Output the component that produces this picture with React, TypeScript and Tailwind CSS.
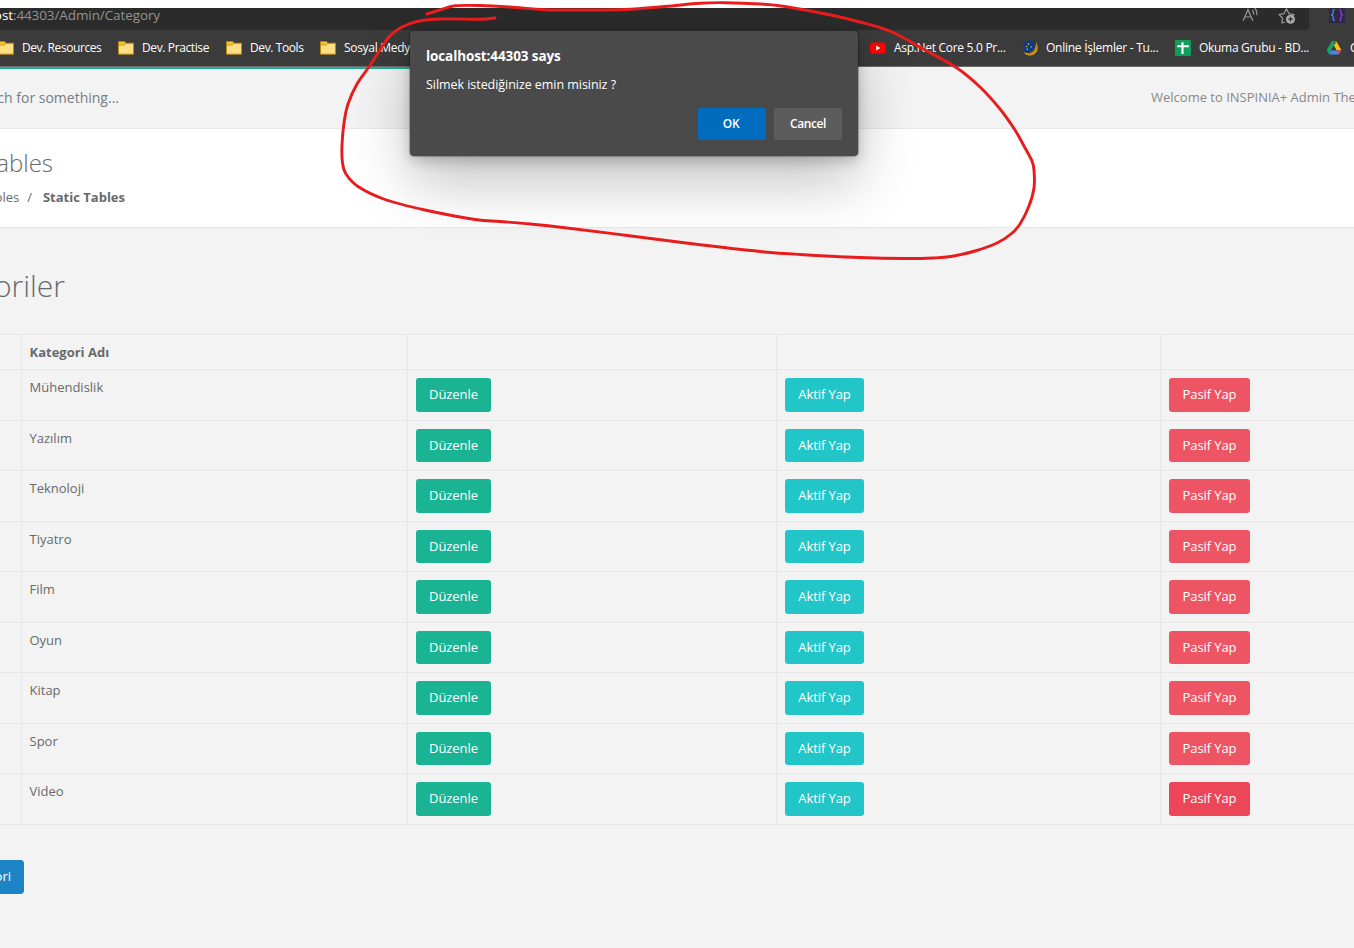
import React from "react";

const UI = "font-['Open_Sans','Noto_Sans',sans-serif]";

type Point = [number, number];

const outline: Point[] = [
  [427, 14], [440, 10], [455, 5.8], [480, 5.5], [510, 7], [545, 9.7], [585, 10], [625, 9.5], [665, 6.5],
  [700, 3.3], [725, 2.7], [760, 4], [785, 6.5], [833, 15.5], [860, 22], [892, 32], [925, 50], [957, 68],
  [980, 87], [1000, 109], [1015, 130], [1024, 146], [1032, 161], [1034, 170], [1034, 188], [1029, 206],
  [1020, 224], [1011, 234], [997, 243], [975, 251], [951, 256.5], [933, 258], [905, 258.5], [860, 257.5],
  [800, 254.5], [760, 251.5], [700, 244.8], [633, 236.2], [567, 228], [530, 224], [500, 221.5], [475, 219.5],
  [425, 210], [385, 199.5], [358, 186.5], [346, 174], [342.5, 163], [342, 145], [344, 123], [348, 104],
  [357, 84], [371, 64], [385, 42], [392, 34], [402, 27], [417, 21.5], [440, 19], [480, 19.3], [495, 18],
];

function smooth(points: Point[]): string {
  let d = `M${points[0][0]} ${points[0][1]}`;
  for (let i = 0; i < points.length - 1; i++) {
    const a = points[Math.max(i - 1, 0)];
    const b = points[i];
    const c = points[i + 1];
    const e = points[Math.min(i + 2, points.length - 1)];
    d += ` C${b[0] + (c[0] - a[0]) / 6} ${b[1] + (c[1] - a[1]) / 6} ${c[0] - (e[0] - b[0]) / 6} ${c[1] - (e[1] - b[1]) / 6} ${c[0]} ${c[1]}`;
  }
  return d;
}

const categories = ["Mühendislik", "Yazılım", "Teknoloji", "Tiyatro", "Film", "Oyun", "Kitap", "Spor", "Video"];

function FolderIcon() {
  return (
    <svg width="16" height="16" viewBox="0 0 16 16" className="shrink-0">
      <path d="M.5 1.5h6l1.2 1.7h7.8v11H.5z" fill="#fede82" stroke="#b8890f" />
      <path d="M1 2h5.3l.9 1.2L6 4.8H1z" fill="#f6c324" />
      <path d="M1 5h5.2l1-1.3" fill="none" stroke="#b8890f" strokeWidth=".8" />
    </svg>
  );
}

function YoutubeIcon() {
  return (
    <svg width="16" height="16" viewBox="0 0 16 16" className="shrink-0">
      <rect y="2.4" width="16" height="11.4" rx="3" fill="#f00" />
      <path d="M6.2 5.6v5l4.3-2.5z" fill="#fff" />
    </svg>
  );
}

function GlobeIcon() {
  return (
    <svg width="16" height="16" viewBox="0 0 16 16" className="shrink-0">
      <path d="M14 2.500c2.200 3.500 2.400 7.500-.4 10.500-3 3.200-8.800 3.700-12.200-1 4 2.300 8.200 1.500 10.700-2C13.500 8 14.200 5.300 14 2.500z" fill="#eaa21f" />
      <path d="M14.600 6c.2 4-3 7.500-7.500 8.300M5 13.500c3 0 6.500-1.500 8-4" fill="none" stroke="#6b5224" strokeWidth=".6" />
      <path d="M1 5.500C2.200 2 5.800-.2 9.300.6c3 .8 3.900 3.600 3 6.500-1 3.300-3.700 5.100-6.800 4.800C2.300 11.500.2 8.800 1 5.500z" fill="#0c3c8c" />
      <path d="M6 3.500l1 1M4 6.500h1.300M8.700 6.600l1 .8M4.800 9.200h1.200" stroke="#f3c340" strokeWidth="1.2" />
    </svg>
  );
}

function SheetIcon() {
  return (
    <svg width="16" height="16" viewBox="0 0 16 16" className="shrink-0">
      <rect width="16" height="16" rx="1.300" fill="#109d58" />
      <path d="M2.300 6.300h11.600M7.500 2.300v11.600" stroke="#fff" strokeWidth="2.100" />
    </svg>
  );
}

function DriveIcon() {
  return (
    <svg width="16" height="16" viewBox="0 0 16 16" className="shrink-0">
      <path d="M5.500 1.500h4.800L5 10.600 2.800 14.300.7 10.200z" fill="#1aa260" />
      <path d="M5.500 1.500h5l4.900 8.800h-5z" fill="#ffc107" />
      <path d="M5.300 10.300h10.100l-2.500 4.100H2.800z" fill="#4285f4" />
      <path d="M10.400 10.300h5l-2.500 4.100z" fill="#e94235" />
      <path d="M5.500 1.500h5L8 5.800z" fill="#178044" />
      <path d="M8 5.800l2.400 4.500H5.300z" fill="#3b3b3b" />
    </svg>
  );
}

function Bookmark({ icon, label, className, textClass }: { icon: React.ReactNode; label: string; className: string; textClass: string }) {
  return (
    <div className={`flex shrink-0 items-center gap-2 ${className}`}>
      {icon}
      <span className={`whitespace-nowrap text-[12px] leading-4 text-white ${textClass}`}>{label}</span>
    </div>
  );
}

function AddressBar() {
  return (
    <div className="flex h-[22px] overflow-hidden bg-[#3b3b3b]">
      <div className="flex w-[1309px] shrink-0 rounded-br-[3px] bg-[#2b2b2b]">
        <div className="flex w-[160px] justify-end overflow-hidden">
          <span className="whitespace-nowrap text-[13.500px] leading-[15px] tracking-[-0.1px] text-[#939393]">
            <span className="text-white">ost</span>:44303/Admin/Category
          </span>
        </div>
        <div className="ml-[1082px] flex gap-[18px]">
          <svg width="18" height="22" viewBox="0 0 18 22" fill="none" stroke="#999" strokeWidth="1.200">
            <path d="M1.200 12.700L6 1.500l4.800 11.200M2.800 9h6.400M10.300 2.300c1.200 1 1.600 2.500 1.200 4.200M12.600.2c2.100 1.700 2.800 4.100 2 7" />
          </svg>
          <svg width="20" height="22" viewBox="0 0 20 22">
            <path d="M7.200 14l-3.300 1 .6-5-3.400-3.400L6 5.700 8.500.8 11 5.700l5 .8-1.500 1.700" fill="none" stroke="#999" strokeWidth="1.200" strokeLinejoin="round" />
            <circle cx="12.500" cy="11.200" r="4.500" fill="#aaa" />
            <path d="M10.100 11.200h4.800M12.500 8.800v4.800" stroke="#2b2b2b" strokeWidth="1.200" />
          </svg>
        </div>
      </div>
      <div className="ml-5 h-[15px] w-4 shrink-0 bg-[#2d2a46]">
        <svg width="16" height="15" viewBox="0 0 16 15" fill="none" strokeWidth="1.200">
          <path d="M5.800 1.500c-2 0-1.600 1-1.600 2.500S4 6.500 2.800 7c1.200.5 1.400 1.500 1.400 3s-.4 2.300 1.600 2.300" stroke="#5596ee" />
          <path d="M10.200 1.500c2 0 1.600 1 1.600 2.500s.2 2.500 1.400 3c-1.200.5-1.400 1.500-1.400 3s.4 2.300-1.600 2.300" stroke="#9d35ee" />
        </svg>
      </div>
    </div>
  );
}

function Bookmarks() {
  return (
    <div className="flex h-9 overflow-hidden bg-[#3b3b3b]">
      <Bookmark className="-ml-[2px] w-[120px]" icon={<FolderIcon />} label="Dev. Resources" textClass="tracking-[-0.42px]" />
      <Bookmark className="w-[108px]" icon={<FolderIcon />} label="Dev. Practise" textClass="tracking-[-0.38px]" />
      <Bookmark className="w-[94px]" icon={<FolderIcon />} label="Dev. Tools" textClass="tracking-[-0.4px]" />
      <Bookmark className="w-[550px]" icon={<FolderIcon />} label="Sosyal Medy" textClass="tracking-[-0.3px]" />
      <Bookmark className="w-[152px]" icon={<YoutubeIcon />} label="Asp.Net Core 5.0 Pr..." textClass="tracking-[-0.3px]" />
      <Bookmark className="w-[153px]" icon={<GlobeIcon />} label="Online İşlemler - Tu..." textClass="tracking-[-0.25px]" />
      <Bookmark className="w-[151px]" icon={<SheetIcon />} label="Okuma Grubu - BD..." textClass="tracking-[-0.3px]" />
      <Bookmark className="w-[60px]" icon={<DriveIcon />} label="G" textClass="" />
    </div>
  );
}

function RowButton({ label, tall, className }: { label: string; tall: boolean; className: string }) {
  return (
    <button className={`flex items-start justify-center whitespace-nowrap rounded-[3px] pt-[7px] text-[13px] font-medium leading-[19px] tracking-[-0.08px] text-white ${tall ? "h-[34px]" : "h-[33px]"} ${className}`}>
      {label}
    </button>
  );
}

const CELL = "border-l border-[#e7e7e7] pt-2 pl-2";
const ROW = "grid grid-cols-[21px_386px_369px_384px_1fr] border-t border-[#e7e7e7]";

function CategoryTable() {
  return (
    <div className="mt-7 border-b border-[#e7e7e7] text-[13px] leading-[19px] text-[#676a6c]">
      <div className={`${ROW} h-[35px]`}>
        <div />
        <div className={`${CELL} font-bold`}><span className="-ml-[0.5px]">Kategori Adı</span></div>
        <div className={CELL} />
        <div className={CELL} />
        <div className={CELL} />
      </div>
      {categories.map((name, i) => (
        <div key={name} className={`${ROW} ${i % 2 === 0 ? "h-[51px]" : "h-[50px]"}`}>
          <div />
          <div className={CELL}><span className="-ml-[0.5px]">{name}</span></div>
          <div className={CELL}>
            <RowButton label="Düzenle" tall={i % 2 === 0} className="w-[75px] bg-[#1ab394]" />
          </div>
          <div className={CELL}>
            <RowButton label="Aktif Yap" tall={i % 2 === 0} className="w-[79px] bg-[#23c6c8]" />
          </div>
          <div className={CELL}>
            <RowButton label="Pasif Yap" tall={i % 2 === 0} className={i === 8 ? "w-[81px] bg-[#ec4758]" : "w-[81px] bg-[#ed5565]"} />
          </div>
        </div>
      ))}
    </div>
  );
}

function ConfirmDialog() {
  return (
    <div className="absolute left-[410px] top-[31px] flex h-[125px] w-[448px] flex-col rounded-[4px] bg-[#4a4a4a] px-4 pt-4 text-white shadow-[0_0_1px_1px_rgba(0,0,0,0.25),0_26px_58px_rgba(0,0,0,0.24),0_5px_14px_rgba(0,0,0,0.2)]">
      <div className="text-[13.500px] font-bold leading-[18px] tracking-[-0.1px]">localhost:44303 says</div>
      <div className="mt-[11px] pt-px text-[12.500px] leading-4 tracking-[-0.05px]">Silmek istediğinize emin misiniz ?</div>
      <div className="mt-[15px] flex justify-end gap-2 text-[12px] font-semibold">
        <button className="h-8 w-[68px] rounded-[2px] bg-[#006cbe] pr-[2px] tracking-[-0.4px]">OK</button>
        <button className="h-8 w-[68px] rounded-[2px] bg-[#5c5c5c] tracking-[-0.4px]">Cancel</button>
      </div>
    </div>
  );
}

export default function App() {
  return (
    <div className={`relative flex h-[948px] w-[1354px] flex-col overflow-hidden bg-[#f3f3f4] ${UI}`}>
      <div className="h-2 shrink-0 bg-white" />
      <AddressBar />
      <Bookmarks />
      <div className="h-px shrink-0 bg-[#6f6b6b]" />
      <header className="flex h-[62px] shrink-0 items-start justify-between overflow-hidden border-b border-[#e7eaec] bg-[#f3f3f3]">
        <div className="h-[61px] w-[420px] border-t-2 border-[#1ab394]">
          <div className="flex w-[119px] justify-end overflow-hidden pt-[19px]">
            <span className="whitespace-nowrap text-[14px] leading-5 text-[#757d84]">rch for something...</span>
          </div>
        </div>
        <div className="w-[203px] overflow-hidden pt-5 text-[13px] leading-5 text-[#888]">
          <span className="whitespace-nowrap">Welcome to INSPINIA+ Admin Theme.</span>
        </div>
      </header>
      <section className="h-[99px] shrink-0 border-b border-[#e7e7e7] bg-white text-[#676a6c]">
        <div className="flex w-[53px] justify-end overflow-hidden pt-[19px]">
          <h2 className="text-[24px] font-light leading-[30px]">Tables</h2>
        </div>
        <div className="mt-[9px] flex w-[125px] justify-end overflow-hidden whitespace-nowrap text-[13px] leading-5">
          <span>ables</span>
          <span className="ml-2">/</span>
          <strong className="ml-[11px] font-bold">Static Tables</strong>
        </div>
      </section>
      <main className="flex flex-1 flex-col bg-[#f3f3f3]">
        <div className="mt-[37px] flex h-[41px] w-[65px] items-center justify-end overflow-hidden">
          <h1 className="text-[30px] font-light leading-[41px] text-[#676a6c]">goriler</h1>
        </div>
        <CategoryTable />
        <div className="mt-[35px] flex w-6 justify-end overflow-hidden rounded-r-[3px]">
          <button className="h-[34px] shrink-0 rounded-[3px] bg-[#1c84c6] px-[13px] text-[13px] font-medium text-white">Kategori</button>
        </div>
      </main>
      <ConfirmDialog />
      <svg className="pointer-events-none absolute left-0 top-0" width="1354" height="948" fill="none">
        <path d={smooth(outline)} stroke="#e81c1c" strokeWidth="2.900" strokeLinecap="round" />
      </svg>
    </div>
  );
}
